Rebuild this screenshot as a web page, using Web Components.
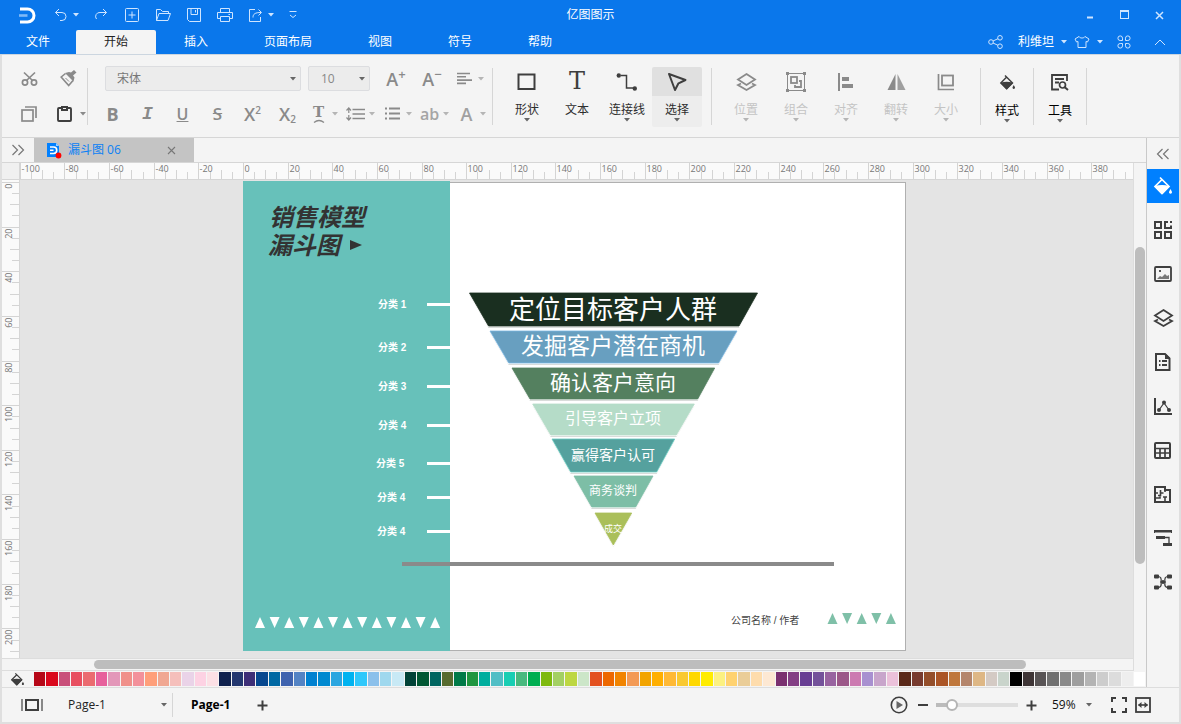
<!DOCTYPE html>
<html lang="zh-CN">
<head>
<meta charset="utf-8">
<title>亿图图示</title>
<style>
html,body{height:100%;margin:0}
body{font:12px/16px "Open Sans","Noto Sans CJK SC",sans-serif;color:#222;overflow:hidden;
--blue:#0a77eb;--panel:#f4f4f4;--line:#d6d6d6;--dim:#8a8a8a;--ink:#3e3e3e}
</style>
</head>
<body>
<diagram-app></diagram-app>
<script>
const S = 'fill="none" stroke="currentColor"';
const ICONS = {
logo:[16,17,'<path d="M1 2H8.500a6 6 0 0 1 0 13H1" fill="none" stroke="#fff" stroke-width="3"/><path d="M0 8.500H8.500" stroke="#7fb9f7" stroke-width="2.600"/>'],
undo:[14,14,`<path d="M5 1L1.500 4.500L5 8M1.500 4.500H8a4 4 0 0 1 0 8H6" ${S}/>`],
redo:[14,14,`<path d="M9 1l3.500 3.500L9 8M12.500 4.500H6a4 4 0 0 0-3.500 6.500" ${S}/>`],
add:[14,14,`<rect x=".5" y=".5" width="13" height="13" rx="1" ${S}/><path d="M7 3.500v7M3.500 7h7" ${S}/>`],
open:[16,14,`<path d="M1.500 12.500V1.500h4l2 2h6v2M1.500 12.500l2.500-7h11.500l-2.500 7z" ${S}/>`],
save:[14,14,`<path d="M.5 .5h13v13h-11l-2-2zM4 .5v6h6.500v-6M8.500 2v2.500" ${S}/>`],
print:[16,14,`<path d="M3.500 4.500v-4h9v4M3.500 10.500h-3v-6h15v6h-3M3.500 8.500h9v5h-9zM11.500 6.500h1.500" ${S}/>`],
export:[14,14,`<path d="M6 1.500H.5v12h11V9M4 9.500C4 6 6 4.500 12 4.500M9.500 1.500l3 3-3 3" ${S}/>`],
more:[8,8,`<path d="M.5 .5h7M1 4l3 2.500L7 4" ${S}/>`],
caret:[6,4,'<path d="M0 0h6L3 3.500z" fill="currentColor"/>'],
share:[16,14,`<circle cx="3" cy="7" r="2.300" ${S}/><circle cx="12" cy="2.800" r="2.300" ${S}/><circle cx="12" cy="11.200" r="2.300" ${S}/><path d="M5 6l5-2.300M5 8l5 2.300" ${S}/>`],
shirt:[16,14,`<path d="M5 1.500L1 4l1.500 3L4 6.500v6h8v-6l1.500.5L15 4l-4-2.500C10 3.500 6 3.500 5 1.500z" ${S}/>`],
apps:[14,14,`<path d="M5.500 5.500H3.200A2.300 2.300 0 1 1 5.500 3.200zM8.500 5.500h2.300A2.300 2.300 0 1 0 8.500 3.200zM5.500 8.500H3.200a2.300 2.300 0 1 0 2.300 2.300zM8.500 8.500h2.300a2.300 2.300 0 1 1-2.300 2.300z" ${S}/>`],
up:[12,7,`<path d="M1 6l5-5 5 5" ${S}/>`],
min:[6,10,'<path d="M0 7.500h6" stroke="currentColor" stroke-width="2"/>'],
max:[10,10,`<rect x=".5" y=".5" width="8" height="8" ${S}/><path d="M0 1h9" stroke="currentColor" stroke-width="2"/>`],
close:[9,9,`<path d="M1 1l7 7M8 1L1 8" ${S} stroke-width="1.500"/>`],
closethin:[9,9,`<path d="M1 1l7 7M8 1L1 8" ${S} stroke-width="1.100"/>`],
cut:[17,16,`<circle cx="4" cy="11.500" r="2.600" ${S} stroke-width="1.700"/><circle cx="13" cy="11.500" r="2.600" ${S} stroke-width="1.700"/><path d="M3 1.500l8.500 8M14 1.500L5.500 9.500" ${S} stroke-width="1.700"/>`],
brush:[17,17,`<path d="M5.500 3.500L1.200 7l7.500 8.500L13 10.500" ${S} stroke-width="1.600"/><path d="M5 3l8.500 8.500 1-4-1.500-2 3.500-3L14 0l-3 2.500-2-.5z" fill="currentColor"/><path d="M5.500 8l3.500 3.500" ${S}/>`],
copy:[16,16,`<rect x="1" y="4" width="11" height="11" ${S} stroke-width="1.700"/><path d="M4 1h11v11" ${S} stroke-width="1.700"/>`],
paste:[15,16,`<rect x="1" y="2" width="13" height="13" rx="1" ${S} stroke-width="1.900"/><rect x="4" y="0" width="7" height="5" fill="currentColor"/><path d="M6 2.500h3" stroke="#f4f4f4"/>`],
alignl:[15,13,`<path d="M0 1.500h13M0 4.800h9M0 8.100h15M0 11.400h9" ${S} stroke-width="1.600"/>`],
linesp:[19,14,`<path d="M6.500 2.500H19M6.500 7H19M6.500 11.500H19" ${S} stroke-width="1.700"/><path d="M2.800 1v5M.5 3.500L2.800 1 5 3.500M2.800 13V8M.5 10.500L2.800 13 5 10.500" ${S} stroke-width="1.200"/>`],
bullets:[15,13,`<path d="M4 1.500h11M4 6.500h11M4 11.500h11M0 1.500h2M0 6.500h2M0 11.500h2" ${S} stroke-width="1.800"/>`],
arc:[12,4,`<path d="M1 3.500Q6 -.5 11 3.500" ${S} stroke-width="1.300"/>`],
rect:[20,18,`<rect x="1.500" y="1.500" width="16" height="14.500" ${S} stroke-width="2"/>`],
connector:[22,18,`<path d="M5 2.500h5.500v12.500H17" ${S} stroke-width="1.500"/><circle cx="2.800" cy="2.500" r="2.200" fill="currentColor"/><circle cx="18.800" cy="15.500" r="2.200" fill="currentColor"/>`],
pointer:[20,18,`<path d="M2 1L18.500 7l-7 3.300L8 17z" ${S} stroke-width="2" stroke-linejoin="round"/>`],
layers:[19,18,`<path d="M9.500 1L18 6.500 9.500 12 1 6.500zM4 10.500L1 12l8.500 5 8.500-5-3-1.500" ${S} stroke-width="1.800"/>`],
group:[20,20,`<path d="M2.500 1.500h15M2.500 18.500h15M1.500 2.500v15M18.500 2.500v15" ${S}/><path d="M0 0h3v3H0zM17 0h3v3h-3zM0 17h3v3H0zM17 17h3v3h-3z" fill="currentColor"/><rect x="5" y="5" width="6" height="6" ${S} stroke-width="1.800"/><path d="M13 9h2v6H9v-2" ${S} stroke-width="1.800"/>`],
align:[16,18,'<path d="M1 0v18" stroke="currentColor" stroke-width="2"/><path d="M4 4h7v4H4zM4 11h11v4H4z" fill="currentColor"/>'],
flip:[19,18,'<path d="M8.500 1v16H.5z" fill="currentColor"/><path d="M10.500 1v16h8z" fill="currentColor" opacity=".8"/>'],
size:[18,18,`<path d="M1.500 1v15.500h15.500" ${S} stroke-width="1.700"/><rect x="5" y="2.500" width="11" height="10" ${S} stroke-width="1.800"/>`],
bucket:[18,18,`<path d="M6 0.500L15 9.500 8 16.500 1 9.500 8 2.500" ${S} stroke-width="1.700"/><path d="M1 9q7-2 14 0v1L8.500 17h-1L1 10z" fill="currentColor"/><path d="M16.500 12l1.300 2.500a1.500 1.500 0 1 1-2.600 0z" fill="currentColor"/>`],
search:[18,17,`<path d="M16 7V1H1v14.500h7M4 5h9M4 8.500h4" ${S} stroke-width="1.800"/><circle cx="11.500" cy="11" r="3" ${S} stroke-width="1.700"/><path d="M13.500 13l3.500 3" ${S} stroke-width="1.900"/>`],
right2:[14,12,`<path d="M1.500 1l5 5-5 5M7.500 1l5 5-5 5" ${S} stroke-width="1.200"/>`],
left2:[14,12,`<path d="M6.500 1l-5 5 5 5M12.500 1l-5 5 5 5" ${S} stroke-width="1.200"/>`],
doc:[15,17,'<path d="M0 1h9l3 3v11H0z" fill="#0080ff"/><path d="M9 1l3 3H9z" fill="#9fcfff"/><path d="M3 5h3.500a3 3 0 0 1 0 6.500H3M3 8.200h3.500" fill="none" stroke="#fff" stroke-width="1.600"/><circle cx="11.500" cy="13.500" r="2.900" fill="#f00"/>'],
blocks:[18,18,`<rect x="1" y="1" width="6" height="6" ${S} stroke-width="2"/><rect x="1" y="11" width="6" height="6" ${S} stroke-width="2"/><rect x="11" y="11" width="6" height="6" ${S} stroke-width="2"/><path d="M14 1h-3v6h6V4.500" ${S} stroke-width="2"/><path d="M16 0h2v2h-2z" fill="currentColor"/>`],
image:[18,16,`<rect x="1" y="1" width="16" height="14" rx="1" ${S} stroke-width="1.800"/><path d="M3 13l3-3 2 1 3-3 2 2 2-1v4z" fill="#777"/><path d="M5 4h2v2H5z" fill="#555"/>`],
page:[16,18,`<path d="M1 1h9l4.500 4.500V17H1z" ${S} stroke-width="2"/><path d="M4 8h1.500M7 8h5M4 12h1.500M7 12h5" ${S} stroke-width="1.800"/><path d="M10 1h1l4 4v1h-5z" fill="currentColor"/>`],
chart:[18,17,`<path d="M1 0v16h17" ${S} stroke-width="2"/><path d="M5 12l5-7 5 7" ${S} stroke-width="1.200"/><circle cx="5" cy="12" r="2" fill="currentColor"/><circle cx="10" cy="4.500" r="2" fill="currentColor"/><circle cx="15" cy="12" r="2" fill="currentColor"/>`],
table:[18,17,`<rect x="1" y="1" width="15" height="15" rx="1" ${S} stroke-width="2"/><path d="M1 6.500h15M1 11h15M6 6.500V16M11 6.500V16" ${S} stroke-width="1.700"/>`],
plan:[18,17,`<path d="M1 1h10v3h5v12H1z" ${S} stroke-width="2"/><path d="M1 7h3M6.500 4v5.500H4M6.500 7h3M1 12h5v-1.500M11 16v-5M9 11h4M11 4v2" ${S} stroke-width="1.600"/>`],
gantt:[18,16,'<path d="M0 0h18v3h-1V2.500H1V3H0zM2 6h9v3H2zM9 13h9v3H9z" fill="currentColor"/><path d="M11 7.500h4V13" fill="none" stroke="currentColor" stroke-width="1.300"/>'],
mind:[18,16,`<path d="M4 2.500q4 0 3 5.500q1 5.500-3 5.500M14 2.500q-4 0-3 5.500q-1 5.500 3 5.500M6 8h6" ${S} stroke-width="1.200"/><path d="M1 1.500h3v2H1zM14 1.500h3v2h-3zM1 12.500h3v2H1zM14 12.500h3v2h-3z" fill="currentColor" stroke="currentColor" stroke-width="2" stroke-linejoin="round"/><circle cx="9" cy="8" r="2" fill="currentColor"/>`],
views:[22,12,`<path d="M1 0v12M21 0v12" stroke="#888" stroke-width="2"/><rect x="5" y="1" width="12" height="10" ${S} stroke-width="2"/>`],
plus:[11,11,`<path d="M5.500 .5v10M.5 5.500h10" ${S} stroke-width="2"/>`],
minus:[10,4,`<path d="M0 2h10" ${S} stroke-width="2"/>`],
play:[18,18,`<circle cx="9" cy="9" r="7.700" ${S} stroke-width="1.600"/><path d="M6.500 5l6.500 4-6.500 4z" fill="#666"/>`],
full:[16,16,`<path d="M1 5V1h4M11 1h4v4M15 11v4h-4M5 15H1v-4" ${S} stroke-width="2"/>`],
fit:[16,16,`<rect x="1" y="1" width="14" height="14" ${S} stroke-width="1.800"/><path d="M3.500 8h9" ${S} stroke-width="1.600"/><path d="M6.500 5v6L3 8zM9.500 5v6L13 8z" fill="currentColor"/>`]
};
const BTN = 'button{all:unset;box-sizing:border-box;display:flex;align-items:center;justify-content:center;cursor:default}';

function define(tag, html, setup) {
  const t = document.createElement('template');
  t.innerHTML = html;
  customElements.define(tag, class extends HTMLElement {
    constructor() {
      super();
      this.attachShadow({mode:'open'}).append(t.content.cloneNode(true));
    }
    connectedCallback() { if (setup && !this.ready) { this.ready = true; setup(this, this.shadowRoot); } }
  });
}

define('ui-icon', '<style>:host{display:inline-flex;flex:none}svg{display:block;overflow:visible}</style>', (host, root) => {
  const [w, h, body] = ICONS[host.getAttribute('name')];
  const size = +host.getAttribute('size') || w;
  root.innerHTML += `<svg width="${size}" height="${Math.round(size * h / w)}" viewBox="0 0 ${w} ${h}" aria-hidden="true">${body}</svg>`;
});

define('icon-button', `<style>:host{display:flex;flex:none;width:32px;height:24px}${BTN}button{width:100%;height:100%}</style>
<button type="button"><slot></slot></button>`, (host, root) => {
  const b = root.querySelector('button');
  b.setAttribute('aria-label', host.getAttribute('label') || '');
  if (host.getAttribute('name')) b.innerHTML = `<ui-icon name="${host.getAttribute('name')}"></ui-icon>`;
});

define('title-bar', `<style>
:host{display:grid;grid-template-columns:1fr auto 1fr;align-items:center;height:30px;color:#cfe5ff}
.quick,.win{display:flex;align-items:center}
.logo{margin:0 14px 0 19px}
icon-button{width:31px}
.s{width:24px}.c{width:6px;margin-right:6px}.x{margin-left:4px}.x+.c{margin-right:3px}
h1{margin:0;font-size:12px;font-weight:400;color:#fff}
.win{justify-content:flex-end;padding-right:4px}.win icon-button{width:35px}
</style>
<div class="quick"><ui-icon class="logo" name="logo"></ui-icon>
<icon-button class="s" name="undo" label="撤销"></icon-button><icon-button class="c" name="caret" label="撤销列表"></icon-button>
<icon-button name="redo" label="重做"></icon-button><icon-button name="add" label="新建"></icon-button><icon-button name="open" label="打开"></icon-button><icon-button name="save" label="保存"></icon-button><icon-button name="print" label="打印"></icon-button>
<icon-button class="s x" name="export" label="导出"></icon-button><icon-button class="c" name="caret" label="导出列表"></icon-button><icon-button name="more" label="自定义"></icon-button></div>
<h1>亿图图示</h1>
<div class="win"><icon-button name="min" label="最小化"></icon-button><icon-button name="max" label="最大化"></icon-button><icon-button name="close" label="关闭"></icon-button></div>`);

define('menu-tab', `<style>:host{display:flex;height:100%;color:#fff}${BTN}button{padding:0 28px;border-radius:2px 2px 0 0}
:host([first]) button{padding:0 26px}:host([active]) button{background:var(--panel);color:#222}</style><button type="button" role="tab"><slot></slot></button>`);

define('menu-bar', `<style>
:host{display:flex;height:24px;justify-content:space-between;color:#cfe5ff}
.tabs,.right{display:flex;align-items:center}.right{padding-right:5px}
icon-button{width:32px}.c{width:8px}.user{width:40px;margin:0 4px;color:#fff}.shirt{width:28px}.last{margin:0 4px}
</style>
<div class="tabs" role="tablist"><menu-tab first>文件</menu-tab><menu-tab active>开始</menu-tab><menu-tab>插入</menu-tab><menu-tab>页面布局</menu-tab><menu-tab>视图</menu-tab><menu-tab>符号</menu-tab><menu-tab>帮助</menu-tab></div>
<div class="right"><icon-button name="share" label="分享"></icon-button><icon-button class="user" label="利维坦">利维坦</icon-button><icon-button class="c" name="caret" label="账户"></icon-button><icon-button class="shirt" name="shirt" label="主题"></icon-button><icon-button class="c" name="caret" label="主题列表"></icon-button><icon-button class="last" name="apps" label="应用"></icon-button><icon-button name="up" label="收起"></icon-button></div>`);

define('big-button', `<style>
:host{display:block;width:50px;flex:none;color:#2e2e2e}
${BTN}button{width:100%;height:60px;flex-direction:column;justify-content:flex-start;border-radius:2px}
.i{height:29px;display:flex;align-items:center;color:#3e3e3e}.l{height:16px;margin:6px 0 0;white-space:nowrap}.c{color:#666}
:host([off]){color:#c4c4c4}:host([off]) .i{color:#8a8a8a}:host([off]) .c{color:#b5b5b5}
:host([on]) button{background:linear-gradient(#e0e0e0 29px,#ededed 29px)}
:host([dark]){color:#000}
.t{font:24px/29px "DejaVu Serif",serif}
</style><button type="button"><span class="i"></span><span class="l"><slot></slot></span><ui-icon class="c" name="caret"></ui-icon></button>`, (host, root) => {
  const n = host.getAttribute('name');
  const size = n === 'bucket' ? ' size="15"' : '';
  root.querySelector('.i').innerHTML = n === 'text' ? '<span class="t">T</span>' : `<ui-icon name="${n}"${size}></ui-icon>`;
  if (host.hasAttribute('nocaret')) root.querySelector('.c').remove();
});

define('drop-list', `<style>
:host{display:grid;align-items:center;flex:none}
select,ui-icon{grid-area:1/1}
select{appearance:none;font:inherit;color:inherit;background:none;border:0;outline:0;margin:0;width:100%;height:100%;padding:0 0 0 var(--inset,0)}
ui-icon{justify-self:end;margin-right:5px;color:#666;pointer-events:none}
:host([boxed]) select{background:#ececec;border:1px solid #dcdde0;border-radius:2px}
</style><select></select><ui-icon name="caret"></ui-icon>`, (host, root) => {
  const s = root.querySelector('select');
  s.setAttribute('aria-label', host.getAttribute('label'));
  s.add(new Option(host.getAttribute('value')));
});

define('ribbon-bar', `<style>
:host{display:flex;align-items:center;height:83px;box-sizing:border-box;background:var(--panel);border-bottom:1px solid var(--line);color:var(--dim);padding-left:6px}
.sep{width:1px;height:57px;background:var(--line);flex:none}
.clip{display:grid;grid-template-columns:42px 28px 9px;row-gap:11px;align-items:center}
.clip icon-button{width:100%}.clip .wide{grid-column:span 2}.clip .dark{color:var(--ink)}
.font{display:flex;flex-direction:column;gap:10px;width:404px}
.row{display:flex;height:25px;align-items:center}
.r1{padding-left:17px}.r2{padding-left:7px}
.face{width:196px;height:25px;margin-right:7px;--inset:11px;color:#777;font-size:12px}.pt{width:62px;height:25px;margin-right:8px;--inset:12px;color:#888;font-size:12px}
.r1 icon-button{width:36px}.r1 .p{width:28px}
.r2 icon-button{width:35px}.r2 .p{width:27px}.row .c{width:6px;margin-right:4px;color:#b5b5b5}
b,i,u,s,span{font-size:18px;line-height:22px}u,s,span{font-weight:600}i{font:italic bold 18px/22px "Liberation Mono",monospace}
sup,sub{font-size:10px;line-height:0;font-weight:600}sub{vertical-align:-2px}.sign{font-size:13px}
.st{display:flex;flex-direction:column;align-items:center;font:bold 15px/14px "DejaVu Serif",serif}
.ab{font-size:16px;color:#a5a5a5}.big{color:#a0a0a0}
u{font-size:16px}s{font-size:17px}
.tools{display:flex;padding:2px 9px 0}
.narrow{padding:3px 1px 0}
</style>
<div class="clip"><icon-button name="cut" label="剪切"></icon-button><icon-button class="wide" name="brush" label="格式刷"></icon-button>
<icon-button name="copy" label="复制"></icon-button><icon-button class="dark" name="paste" label="粘贴"></icon-button><icon-button name="caret" label="粘贴选项"></icon-button></div>
<div class="sep"></div>
<div class="font">
<div class="row r1"><drop-list class="face" boxed label="字体" value="宋体"></drop-list><drop-list class="pt" boxed label="字号" value="10"></drop-list>
<icon-button label="增大字号"><span>A<sup class="sign">+</sup></span></icon-button><icon-button label="减小字号"><span>A<sup class="sign">−</sup></span></icon-button><icon-button class="p" name="alignl" label="对齐"></icon-button><icon-button class="c" name="caret" label="对齐方式"></icon-button></div>
<div class="row r2"><icon-button label="粗体"><b>B</b></icon-button><icon-button label="斜体"><i>I</i></icon-button><icon-button label="下划线"><u>U</u></icon-button><icon-button label="删除线"><s>S</s></icon-button><icon-button label="上标"><span>X<sup>2</sup></span></icon-button><icon-button label="下标"><span>X<sub>2</sub></span></icon-button>
<icon-button class="p" label="文字方向"><div class="st">T<ui-icon name="arc"></ui-icon></div></icon-button><icon-button class="c" name="caret"></icon-button>
<icon-button class="p" name="linesp" label="行距"></icon-button><icon-button class="c" name="caret"></icon-button>
<icon-button class="p" name="bullets" label="项目符号"></icon-button><icon-button class="c" name="caret"></icon-button>
<icon-button class="p" label="高亮"><span class="ab">ab</span></icon-button><icon-button class="c" name="caret"></icon-button>
<icon-button class="p" label="字体颜色"><span class="big">A</span></icon-button><icon-button class="c" name="caret"></icon-button></div>
</div>
<div class="sep"></div>
<div class="tools"><big-button name="rect">形状</big-button><big-button name="text" nocaret>文本</big-button><big-button name="connector">连接线</big-button><big-button name="pointer" on>选择</big-button></div>
<div class="sep"></div>
<div class="tools"><big-button off name="layers">位置</big-button><big-button off name="group">组合</big-button><big-button off name="align">对齐</big-button><big-button off name="flip">翻转</big-button><big-button off name="size">大小</big-button></div>
<div class="sep"></div>
<div class="tools narrow"><big-button dark name="bucket">样式</big-button></div><div class="sep"></div>
<div class="tools narrow"><big-button dark name="search">工具</big-button></div><div class="sep"></div>`);

define('doc-tabs', `<style>
:host{display:flex;height:24px;background:var(--panel);border-bottom:1px solid var(--line)}
.tab{display:flex;align-items:center;width:160px;box-sizing:border-box;background:#c4c4c4;padding:0 8px 0 13px;color:#0a80f5;font-size:12px}
.tab a{flex:1;margin-left:6px;color:inherit;text-decoration:none}.tab icon-button{width:30px;color:#777}
.all{color:#777}
</style><icon-button class="all" name="right2" label="全部文档"></icon-button><div class="tab"><ui-icon name="doc"></ui-icon><a href="#doc">漏斗图 06</a><icon-button name="closethin" label="关闭文档"></icon-button></div>`);

define('scale-ruler', `<style>
:host{display:block;background:#fafafa;overflow:hidden;box-sizing:border-box;border-bottom:1px solid var(--line);min-width:0}
:host([vertical]){border-bottom:0;border-right:1px solid var(--line)}
svg{display:block;width:100%;height:100%}text{font-size:9px;fill:#777}path{stroke:#d4d4d4;fill:none}
</style><svg aria-hidden="true"></svg>`, (host, root) => {
  const v = host.hasAttribute('vertical'), zero = +host.getAttribute('zero');
  const from = v ? 0 : -100, depth = v ? 17 : 16;
  let d = '', t = '';
  for (let k = from; k <= +host.getAttribute('to'); k += 5) {
    const p = Math.round(zero + k * 2.232) + .5;
    const len = k % 20 === 0 ? depth : k % 10 ? 7 : 9;
    d += v ? `M${depth - len} ${p}h${len}` : `M${p} ${depth - len}v${len}`;
    if (k % 20 === 0) t += v ? `<text text-anchor="end" transform="translate(10 ${p + 1}) rotate(-90)">${k}</text>` : `<text x="${p + 1}" y="9">${k}</text>`;
  }
  root.querySelector('svg').innerHTML = `<path d="${d}"/>${t}`;
});

define('funnel-page', `<style>
:host{display:block}svg{display:block}
text{font-family:"Liberation Sans","Noto Sans CJK SC",sans-serif}
.f{fill:#fff;text-anchor:middle}.k{fill:#fff;font-size:10px;font-weight:700}.h{font-size:24px;font-style:italic;font-weight:700;fill:#333}
</style><svg width="664" height="471" viewBox="243 181 664 471"></svg>`, (host, root) => {
  let o = '<rect x="243.5" y="182.500" width="662" height="468" fill="#fff" stroke="#b0b0b0"/><rect x="243" y="181" width="207" height="470" fill="#67c1ba"/>';
  o += '<text class="h" x="269" y="226">销售模型</text><text class="h" x="268" y="254">漏斗图</text><path d="M350 240l12 5-12 5z" fill="#333"/>';
  [[378,304,1],[378,347,2],[378,386,3],[378,425,4],[376,463,5],[377,497,4],[377,531,4]].forEach(([x,y,n]) => {
    o += `<text class="k" x="${x}" y="${y + 4}">分类 ${n}</text><path d="M427 ${y - 1}h23v3h-23z" fill="#fff"/>`; });
  const rows = [
    ['469.500,293 757.500,293 739,326 488.500,326','#1a2f20','#1a2f20','定位目标客户人群',26,319],
    ['490,331 737,331 718.700,363 508.700,363','#689fc0','#7ab5df','发掘客户潜在商机',23,354],
    ['512,368 714.700,368 697.700,399 530,399','#54805f','#54805f','确认客户意向',21,390],
    ['532.700,404 694.300,404 676.300,435 550.700,435','#b5dcc8','#b5dcc8','引导客户立项',16,424],
    ['552,439 674.700,439 656.700,472 570.700,472','#55a19e','#67cabf','赢得客户认可',14,460],
    ['574,476 653,476 635.700,507 591.700,507','#7dbea6','#7dbea6','商务谈判',12,495],
    ['595,513 631.700,513 613.300,545','#aabf5a','#aabf5a','成交',9,532]];
  rows.forEach(([p, f, s, text, size, y]) => {
    o += `<polygon points="${p}" transform="translate(0 2)" fill="#d9dcda"/><polygon points="${p}" fill="${f}" stroke="#fff" stroke-width="2" paint-order="stroke"/><polygon points="${p}" fill="none" stroke="${s}" stroke-width=".8"/>
    <text class="f" x="613" y="${y}" font-size="${size}">${text}</text>`; });
  o += '<path d="M402 562h432v4H402z" fill="#8a8a8a"/>';
  for (let i = 0; i < 13; i++) { const x = 260 + i * 14.6; o += i % 2 ? `<path d="M${x - 5} 617h10l-5 11z" fill="#fff"/>` : `<path d="M${x - 5} 628h10l-5-11z" fill="#fff"/>`; }
  for (let i = 0; i < 5; i++) { const x = 832.5 + i * 14.6; o += i % 2 ? `<path d="M${x - 5} 613h10l-5 11z" fill="#7fc0a8"/>` : `<path d="M${x - 5} 624h10l-5-11z" fill="#7fc0a8"/>`; }
  o += '<text x="731" y="624" font-size="10" fill="#444">公司名称 / 作者</text>';
  root.querySelector('svg').innerHTML = o;
});

define('work-area', `<style>
:host{display:grid;grid-template:17px minmax(0,1fr) / 18px minmax(0,1fr) 13px;min-height:0;background:#e4e4e4}
.corner{background:#f0f0f0;border-right:1px solid var(--line);border-bottom:1px solid var(--line)}
.v{grid-column:3;grid-row:1/3;background:var(--panel);border-left:1px solid #ddd;padding:84px 1px 94px;display:flex}
.v span{flex:1;background:#bdbdbd;border-radius:5px}
.stage{position:relative;overflow:hidden;min-height:0}
funnel-page{position:absolute;left:223px;top:1px}
</style><div class="corner"></div><scale-ruler zero="223" to="395"></scale-ruler><div class="v"><span></span></div>
<scale-ruler vertical zero="2" to="210"></scale-ruler><div class="stage"><funnel-page></funnel-page></div>`);

define('h-scroll', `<style>:host{display:flex;height:13px;box-sizing:border-box;background:var(--panel);border:1px solid #ddd;border-left:0;margin-right:12px;padding:1px 107px 1px 92px}
span{flex:1;background:#bdbdbd;border-radius:5px}</style><span></span>`);

define('colour-strip', `<style>
:host{display:flex;align-items:center;height:16px;background:var(--panel)}
ui-icon{margin-left:9px;width:23px;color:var(--ink)}
.row{display:flex;flex:1;gap:1px;height:14px;min-width:0}
${BTN}.row button{flex:1 1 0;min-width:0}
</style><ui-icon name="bucket" size="13"></ui-icon><div class="row"></div>`, (host, root) => {
  const list = 'b60717 da071c c94f7a e84f60 eb6b70 e7609c e397b9 f0908a f3919b ff9f7a f0a792 f5bfbb ead3e8 fdd2e3 fce0e5 0f214d 23376f 3d2e77 06478f 0068a3 3e62ae 5383c4 0081d0 0089d0 2ba6e0 00b3f0 30c8fb 8bc0eb 9fd8ee c8e9f5 004237 005733 006560 576b2f 007a48 1f9640 00ae9e 50bec5 18ceb3 48b97e 00ae51 7eb90e a3d063 bdd741 cce6c8 e35120 ed6800 f18400 f39a55 f2a400 ffaf00 ffb935 f9c931 ffd800 ffec00 fcf181 ffd270 eacd98 fedcac fde8d3 7a3070 833e84 683e93 74529a 9863a0 9b5788 cc7ab1 a890d0 c8a5cb ebc1da 5a2919 783b2f 944e2a ab5526 bf773c b4856b deb785 d4cac4 c9d4cb 000000 3e3536 585455 707070 898989 9e9e9e b4b4b4 cdcdcd dcdcdc eeeeee ffffff';
  root.querySelector('.row').innerHTML = list.split(' ').map(c => `<button type="button" aria-label="#${c}" style="background:#${c}"></button>`).join('');
});

define('side-dock', `<style>
:host{display:flex;flex-direction:column;width:32px;background:var(--panel);border-left:1px solid #c9c9c9;color:var(--ink)}
icon-button{height:44px}.top{height:31px;color:#777}.on{height:34px;background:#0080ff;color:#fff;margin-bottom:5px}
</style><icon-button class="top" name="left2" label="收起面板"></icon-button><icon-button class="on" label="填充"><ui-icon name="bucket"></ui-icon></icon-button>
<icon-button name="blocks" label="符号库"></icon-button><icon-button name="image" label="图片"></icon-button><icon-button name="layers" label="图层"></icon-button><icon-button name="page" label="页面"></icon-button><icon-button name="chart" label="图表"></icon-button><icon-button name="table" label="表格"></icon-button><icon-button name="plan" label="平面图"></icon-button><icon-button name="gantt" label="甘特图"></icon-button><icon-button name="mind" label="思维导图"></icon-button>`);

define('status-bar', `<style>
:host{display:flex;justify-content:space-between;align-items:center;height:35px;box-sizing:border-box;background:var(--panel);border-top:1px solid #ddd;color:var(--ink);font-size:12px}
div{display:flex;align-items:center}
.pages{padding-left:12px}.views{width:36px}.pages drop-list{width:104px;height:24px;margin-left:18px;color:#222;--inset:0px;font-size:12px}
i{width:1px;height:24px;background:var(--line)}
.pages a{margin:0 20px 0 18px;font-weight:700;color:#000;text-decoration:none}
.zoom{padding-right:24px}.zoom icon-button,.pages .add{width:24px}
.zoom drop-list{width:45px;height:24px;margin:0 10px 0 9px;color:#111;--inset:0px}
input{appearance:none;width:82px;height:16px;margin:0 1px;background:linear-gradient(90deg,#bbb 15px,#dedede 15px) center/100% 4px no-repeat;border-radius:2px}
input::-webkit-slider-thumb{appearance:none;width:12px;height:12px;box-sizing:border-box;border:2px solid #b5b5b5;border-radius:50%;background:#fff}
</style><div class="pages"><icon-button class="views" name="views" label="页面视图"></icon-button><drop-list label="页面" value="Page-1"></drop-list><i></i><a href="#page-1">Page-1</a><icon-button class="add" name="plus" label="添加页面"></icon-button></div>
<div class="zoom"><icon-button name="play" label="播放"></icon-button><icon-button name="minus" label="缩小"></icon-button><input type="range" aria-label="缩放" min="0" max="100" value="14"><icon-button name="plus" label="放大"></icon-button><drop-list label="缩放比例" value="59%"></drop-list><icon-button name="full" label="全屏"></icon-button><icon-button name="fit" label="适合宽度"></icon-button></div>`);

define('diagram-app', `<style>
:host{display:flex;flex-direction:column;height:100vh;background:#dfdfdf}
header{background:var(--blue)}
.body{flex:1;min-height:0;display:flex;flex-direction:column;padding:0 2px 2px;background:#dfdfdf;border-top:1px solid #ccd6e0}
.mid{flex:1;min-height:0;display:flex}
main{flex:1;min-width:0;display:flex;flex-direction:column;background:var(--panel)}
work-area{flex:1}
</style><header><title-bar></title-bar><menu-bar></menu-bar></header>
<div class="body"><ribbon-bar></ribbon-bar><div class="mid"><main><doc-tabs></doc-tabs><work-area></work-area><h-scroll></h-scroll><colour-strip></colour-strip></main><side-dock></side-dock></div><status-bar></status-bar></div>`);
</script>
</body>
</html>
